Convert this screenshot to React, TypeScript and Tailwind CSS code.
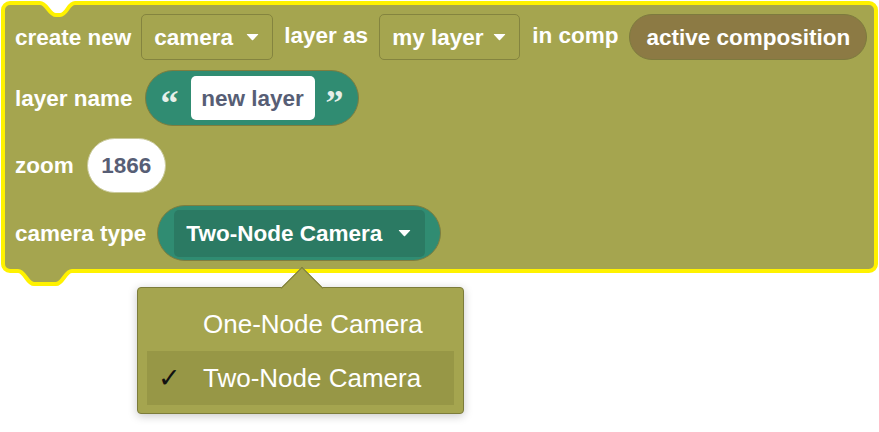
import type { ReactNode } from 'react';

const BLOCK = '#a5a54f';
const GLOW = '#fff200';

function Caret({ className = '' }: { className?: string }) {
  return (
    <svg width="13" height="8" viewBox="0 0 13 8" className={className}>
      <path d="M1.2 1 L11.8 1 Q12.6 1 12 1.8 L7.1 7 Q6.5 7.6 5.9 7 L1 1.8 Q0.4 1 1.2 1 Z" fill="#ffffff" />
    </svg>
  );
}

function Label({ children }: { children: ReactNode }) {
  return (
    <span className="text-[22.5px] font-bold text-white leading-none whitespace-nowrap translate-y-[1px]">
      {children}
    </span>
  );
}

function Dropdown({ text, width }: { text: string; width: string }) {
  return (
    <div
      className={`${width} h-[46px] flex items-center justify-between pl-[12px] pr-[13px] rounded-[5px] border border-[#84843f] bg-[#a5a54f]`}
    >
      <Label>{text}</Label>
      <Caret />
    </div>
  );
}

function Quote({ char, className = '' }: { char: string; className?: string }) {
  return (
    <span
      className={`w-[18px] h-[30px] text-[36px] font-bold text-[#e6efe9] leading-none pt-[2px] font-['Liberation_Serif',serif] ${className}`}
    >
      {char}
    </span>
  );
}

export default function App() {
  return (
    <div className="relative w-[879px] h-[432px] bg-white font-['Liberation_Sans',Arial,sans-serif] overflow-hidden">
      {/* block body */}
      <div className="ml-[1px] mt-[1px] w-[877px] border-4 border-[#fff200] rounded-[9px] bg-[#a5a54f] pl-[10px] pt-[9px] pb-[8px]">
        <div className="flex items-center h-[46px]">
          <Label>create new</Label>
          <div className="ml-[10px]">
            <Dropdown text="camera" width="w-[132px]" />
          </div>
          <div className="ml-[11px]">
            <Label>layer as</Label>
          </div>
          <div className="ml-[11px]">
            <Dropdown text="my layer" width="w-[141px]" />
          </div>
          <div className="ml-[12px]">
            <Label>in comp</Label>
          </div>
          <div className="ml-[11px] w-[238px] h-[46px] rounded-full bg-[#8c7a44] border border-[#7d7a3e] flex items-center justify-center">
            <Label>active composition</Label>
          </div>
        </div>

        <div className="flex items-center h-[56px] mt-[10px]">
          <Label>layer name</Label>
          <div className="ml-[12px] w-[214px] h-[56px] rounded-full bg-[#308c72] border border-[#7f7d3e] flex items-center pl-[15px]">
            <Quote char="“" />
            <div className="ml-[12px] w-[124px] h-[44px] rounded-[5px] bg-white flex items-center justify-center">
              <span className="text-[22.5px] font-bold text-[#575e75] leading-none translate-y-[1px]">new layer</span>
            </div>
            <Quote char="”" className="ml-[11px]" />
          </div>
        </div>

        <div className="flex items-center h-[55px] mt-[12px]">
          <Label>zoom</Label>
          <div className="ml-[13px] w-[79px] h-[55px] rounded-full bg-white border border-[#c9c99a] flex items-center justify-center">
            <span className="text-[22.5px] font-bold text-[#575e75] leading-none translate-y-[1px]">1866</span>
          </div>
        </div>

        <div className="flex items-center h-[56px] mt-[12px]">
          <Label>camera type</Label>
          <div className="ml-[11px] w-[284px] h-[56px] rounded-full bg-[#308c72] border border-[#7f7d3e] flex items-center pl-[16px]">
            <div className="w-[251px] h-[47px] rounded-[5px] bg-[#2b7a63] flex items-center justify-between pl-[12px] pr-[14px]">
              <Label>Two-Node Camera</Label>
              <Caret />
            </div>
          </div>
        </div>
      </div>

      {/* top notch */}
      <svg className="absolute left-0 top-0" width="100" height="22" viewBox="0 0 100 22">
        <rect x="30" y="2" width="56" height="18" fill={BLOCK} />
        <path d="M30 0 L30 3 L40 3 C47 3 49 15 56 15 L60 15 C67 15 68 3 75 3 L86 3 L86 0 Z" fill="#ffffff" />
        <path d="M30 3 L40 3 C47 3 49 15 56 15 L60 15 C67 15 68 3 75 3 L86 3" fill="none" stroke={GLOW} strokeWidth="4" />
      </svg>

      {/* bottom notch */}
      <svg className="absolute left-0 top-[258px]" width="100" height="32" viewBox="0 258 100 32">
        <path d="M10 262 L10 271 L18 271 C25 271 27 284 34 284 L56 284 C63 284 65 271 72 271 L80 271 L80 262 Z" fill={BLOCK} />
        <path d="M10 271 L18 271 C25 271 27 284 34 284 L56 284 C63 284 65 271 72 271 L80 271" fill="none" stroke={GLOW} strokeWidth="4" />
      </svg>

      {/* dropdown menu */}
      <div className="absolute left-[137px] top-[287px] w-[327px] rounded-[4px] border border-[#7c7c3a] bg-[#a5a54f] shadow-[0_2px_10px_rgba(0,0,0,0.22)] px-[9px] pt-[9px] pb-[8px]">
        <div className="absolute left-[142px] top-[-21px] w-[44px] h-[22px] overflow-hidden">
          <div className="absolute left-[7px] top-[6px] w-[30px] h-[30px] rotate-45 bg-[#a5a54f] border-t border-l border-[#7c7c3a]" />
        </div>
        <div className="h-[54px] flex items-center pl-[56px]">
          <span className="text-[26px] text-white leading-none">One-Node Camera</span>
        </div>
        <div className="relative h-[54px] flex items-center pl-[56px] bg-[#979746]">
          <span className="absolute left-[11px] top-[13px] text-[27px] text-[#111] leading-none font-['DejaVu_Sans',sans-serif]">
            ✓
          </span>
          <span className="text-[26px] text-white leading-none">Two-Node Camera</span>
        </div>
      </div>
    </div>
  );
}
